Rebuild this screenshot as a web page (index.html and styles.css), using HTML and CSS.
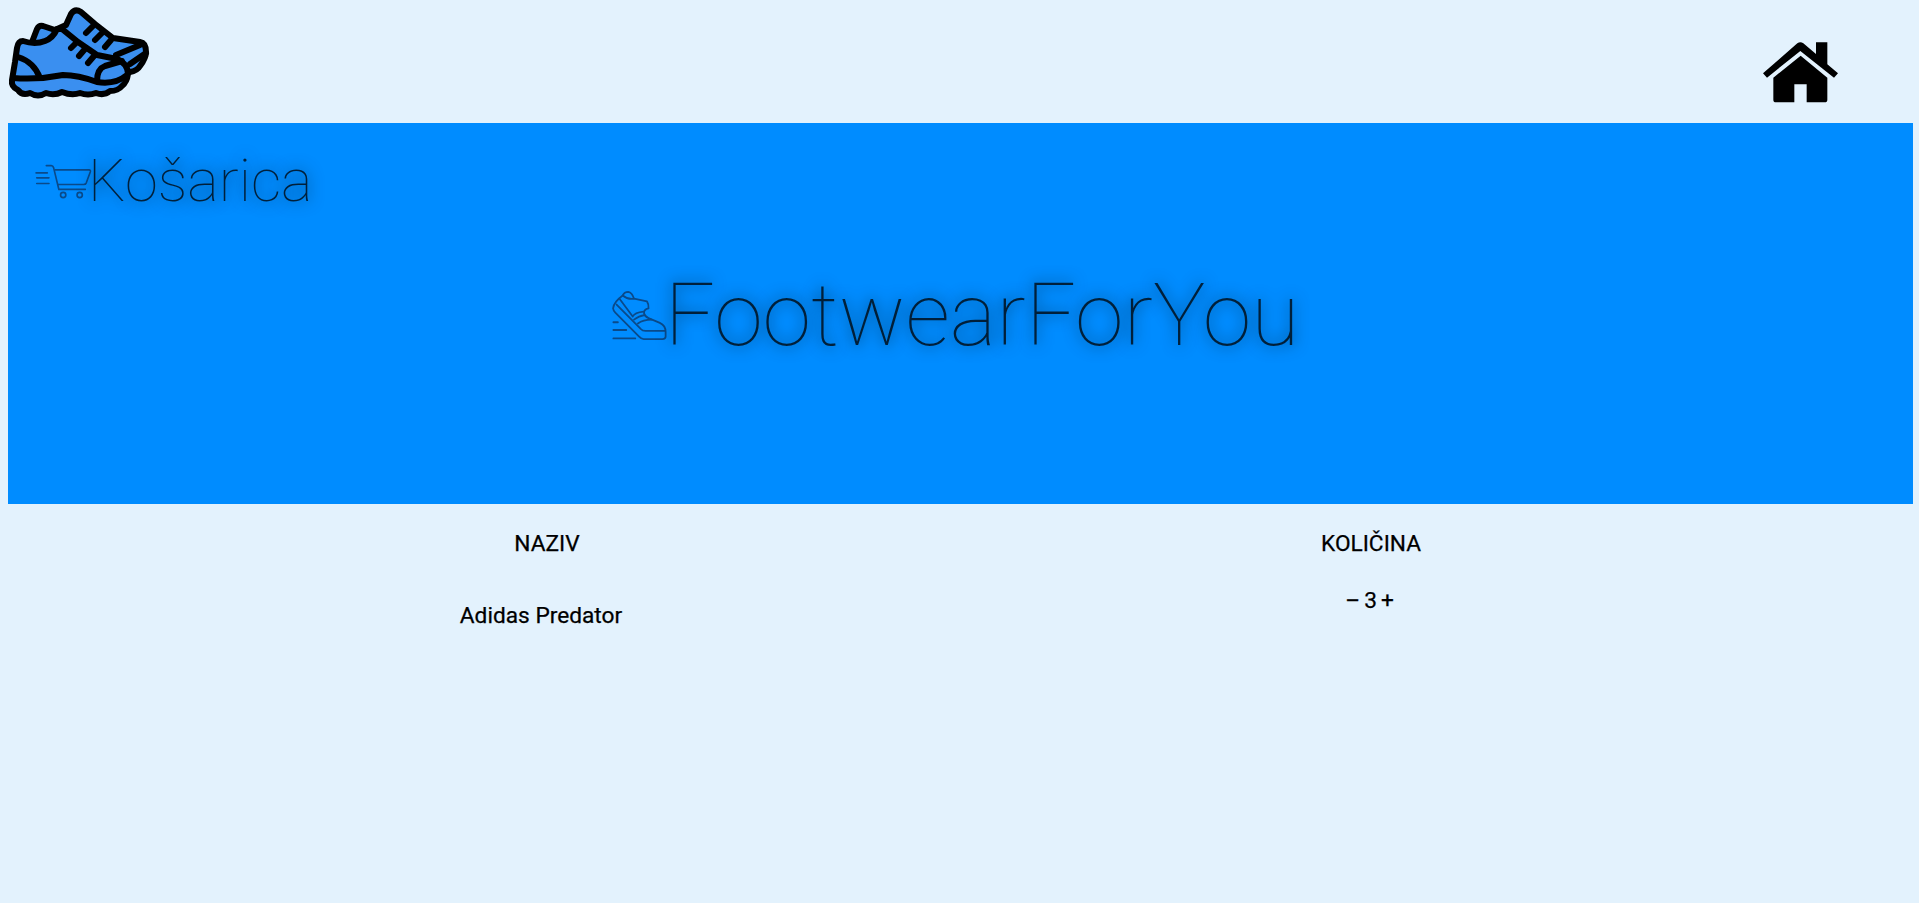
FILE: index.html
```html
<!DOCTYPE html>
<html lang="hr">
<head>
<meta charset="utf-8">
<title>Košarica</title>
<link rel="stylesheet" href="styles.css">
</head>
<body>
<header class="topbar">
  <svg class="logo" viewBox="0 0 170 110" aria-hidden="true">
    <g fill="#3a8ff0" stroke="#000" stroke-width="6" stroke-linejoin="round" stroke-linecap="round">
      <path d="M32 42 L37 29 Q39 25 43 26 L55 30 L66 25 L71 14 Q75 8 81 12 L95 24 L113 38 L140 42 Q146 43 146 52 Q146 58 140 66 Q137 71 130 72 L60 50 Z"/>
      <path d="M23 41 Q35 45 45 41 Q53 38 57 29 L62 29 L78 42 L97 55 L117 59 Q128 64 128 74 Q127 82 122 86 Q118 91 110 91 Q104 96 96 93 Q88 96 80 93 Q72 96 62 92 Q54 96 46 93 Q38 98 30 93 Q22 96 18 90 Q11 87 12 80 L15 62 L17 48 Q18 41 23 41 Z"/>
      <path fill="none" d="M13 78 Q38 80 63 75 Q78 75 97 82 Q115 85 127 75"/>
      <path fill="none" d="M18 57 Q34 62 40 78"/>
      <path fill="none" d="M97 81 Q97 69 105 66 L122 61"/>
      <path fill="none" d="M71 48 L77 42 M79 56 L85 49 M88 63 L94 56"/>
      <path fill="none" d="M86 33 L92 27 M95 40 L102 33 M105 47 L111 40"/>
      <path fill="none" d="M116 55 L140 45"/>
      <path fill="none" d="M130 64 L146 53"/>
    </g>
  </svg>
  <svg class="home" viewBox="0 0 360 270" aria-hidden="true">
    <path d="M228 52H262V118L294 145 282 158 181 78 81 158 69 145 172 55Q181 49 190 55L228 87Z"/>
    <path d="M182 92 100 158V224Q100 232 108 232H163V178H200V232H254Q262 232 262 224V158Z"/>
  </svg>
</header>

<section class="hero">
  <h2 class="cart-title">
    <svg class="cart-icon" viewBox="43 60 175 115" aria-hidden="true">
      <g fill="none" stroke="#0a4a8a" stroke-width="5" stroke-linecap="round" stroke-linejoin="round">
        <path d="M77 68H92Q97 68 99 74L115 140H195"/>
        <path d="M104 81H206Q212 81 210 87L198 120Q196 125 190 125H112"/>
        <path d="M46 90H80M48 105H85M48 122H85"/>
        <circle cx="128" cy="157" r="8"/>
        <circle cx="178" cy="157" r="8"/>
      </g>
    </svg>Košarica
  </h2>
  <h1 class="brand">
    <svg class="shoe-icon" viewBox="42 68 170 155" aria-hidden="true">
      <g fill="none" stroke="#0a4a8a" stroke-width="5.5" stroke-linecap="round" stroke-linejoin="round">
        <path d="M45 125Q47 105 75 85Q80 74 92 74Q104 76 110 95L150 103Q156 112 155 125Q140 128 141 140Q143 150 155 155L190 170Q208 178 208 198V212Q208 220 198 220H140Q132 220 125 212L52 138Q46 132 45 125Z"/>
        <path d="M56 113L130 188Q136 195 146 195H206"/>
        <path d="M75 85Q90 98 110 95M65 95L106 150Q112 138 140 135M110 160Q125 148 143 146M122 172Q138 160 165 160"/>
        <path d="M46 168H60M46 192H86M46 218H114"/>
      </g>
    </svg>FootwearForYou
  </h1>
</section>

<section class="cart-table">
  <div class="col-head">NAZIV</div>
  <div class="col-head">KOLIČINA</div>
  <div></div>
  <div class="item-name">Adidas Predator</div>
  <div class="qty"><span>–</span><span>3</span><span>+</span></div>
  <div></div>
</section>
</body>
</html>
```
FILE: styles.css
```css
html, body {
  margin: 0;
  padding: 0;
}
body {
  background: #e3f2fd;
  font-family: Roboto, "Liberation Sans", sans-serif;
  color: #000;
  padding: 8px 6px 8px 8px;
  height: 903px;
  box-sizing: border-box;
  overflow: hidden;
}
.topbar {
  height: 115px;
  display: flex;
  justify-content: space-between;
  align-items: flex-start;
}
.logo {
  width: 170px;
  height: 110px;
  margin-top: -8px;
  margin-left: -8px;
}
.home {
  width: 120px;
  height: 90px;
  margin-top: 17px;
  margin-right: 53px;
  fill: #000;
}
.hero {
  background: #008cff;
  height: 381px;
  box-sizing: border-box;
  padding: 26px 37px 0 27px;
}
.cart-title, .brand {
  margin: 0;
  font-weight: 100;
  color: rgba(0, 0, 0, 0.75);
  text-shadow: 0 0 15px rgba(0, 0, 0, 0.7);
  display: flex;
  align-items: center;
  line-height: 1;
}
.cart-title {
  font-size: 59.5px;
  height: 66px;
}
.cart-icon {
  width: 58px;
  height: 38px;
  margin-right: -5px;
  flex: none;
}
.brand {
  font-size: 88px;
  justify-content: center;
  margin-top: 56px;
}
.shoe-icon {
  width: 55px;
  height: 50px;
  margin-right: -2px;
  flex: none;
}
.cart-table {
  display: grid;
  grid-template-columns: 1078px 570px 1fr;
  font-size: 22.7px;
  font-weight: 400;
  -webkit-text-stroke: 0.25px #000;
  text-align: center;
}
.col-head {
  padding-top: 27px;
  line-height: 26px;
}
.item-name {
  padding-top: 46px;
  padding-right: 12px;
  line-height: 26px;
}
.qty {
  padding-top: 31px;
  padding-right: 3px;
  line-height: 26px;
  display: flex;
  justify-content: center;
  gap: 4px;
}
```
